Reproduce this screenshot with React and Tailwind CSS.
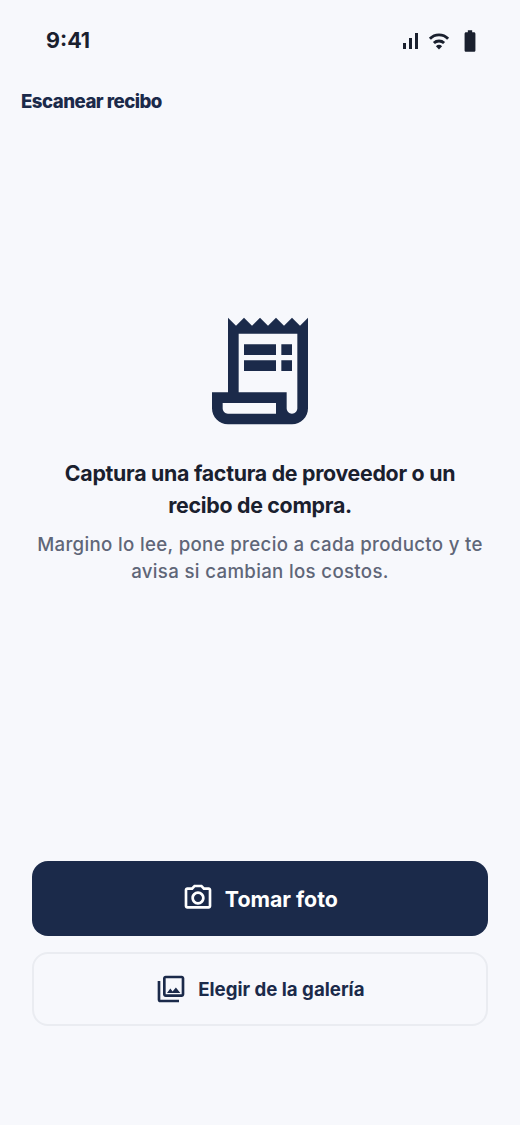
import React from 'react';
import {
  MdBatteryFull,
  MdOutlinePhotoCamera,
  MdOutlinePhotoLibrary,
  MdOutlineReceiptLong,
  MdSignalCellularAlt,
} from 'react-icons/md';

const WifiIcon = () => (
  <svg className="size-6 mr-[6px]" viewBox="0 0 24 24" fill="none" stroke="currentColor" aria-hidden="true">
    <path strokeWidth={2.9} d="M2.9 9.7A12.8 12.8 0 0 1 21.1 9.7" />
    <path strokeWidth={2.9} d="M6.9 14A7.4 7.4 0 0 1 17.1 14" />
    <path fill="currentColor" stroke="none" d="M12 20.4L8.9 17.2a4.5 4.5 0 0 1 6.2 0z" />
  </svg>
);

const StatusBar = () => {
  return (
    <div className="flex items-center justify-between h-[81px] pl-[46px] pr-[37px] text-[#1a202e]">
      <span className="text-[21.5px] font-bold leading-none">9:41</span>
      <div className="flex items-center">
        <MdSignalCellularAlt className="size-6 mr-[5px]" aria-hidden="true" />
        <WifiIcon />
        <MdBatteryFull className="size-[26px]" aria-hidden="true" />
      </div>
    </div>
  );
};

const App = () => {
  return (
    <div className="h-[1125px] flex flex-col bg-[#f7f8fc] font-['Inter',sans-serif]">
      <StatusBar />

      {/* Header */}
      <header className="px-[21px] pt-px h-10 flex items-center">
        <h1 className="text-[18.67px] font-extrabold tracking-[-0.53px] text-[#1b2a4a]">
          Escanear recibo
        </h1>
      </header>

      {/* Empty state */}
      <main className="flex-grow flex flex-col items-center text-center px-8 pt-[186px]">
        <MdOutlineReceiptLong className="size-32 text-[#1b2a4a]" aria-hidden="true" />
        <h2 className="mt-[21.5px] text-[21.33px] leading-8 font-bold tracking-[-0.28px] text-[#1a202e]">
          Captura una factura de proveedor o un<br />recibo de compra.
        </h2>
        <p className="mt-[11.5px] text-[18.67px] leading-[26.67px] font-medium tracking-[0.33px] text-[#5f6678] whitespace-nowrap">
          Margino lo lee, pone precio a cada producto y te<br />avisa si cambian los costos.
        </p>
      </main>

      {/* Actions */}
      <div className="flex flex-col gap-4 px-8 pb-[99px]">
        <button className="h-[75px] rounded-2xl bg-[#1b2a4a] text-white flex items-center justify-center gap-[10.67px] text-[21.33px] font-bold">
          <MdOutlinePhotoCamera className="size-8 -mt-0.5" aria-hidden="true" />
          <span className="pt-0.5">Tomar foto</span>
        </button>
        <button className="h-[74px] rounded-2xl border-2 border-[#eaecf1] text-[#1b2a4a] flex items-center justify-center gap-[10.67px] text-[18.67px] font-bold">
          <MdOutlinePhotoLibrary className="size-8" aria-hidden="true" />
          <span className="pt-px">Elegir de la galería</span>
        </button>
      </div>
    </div>
  );
};

export default App;
